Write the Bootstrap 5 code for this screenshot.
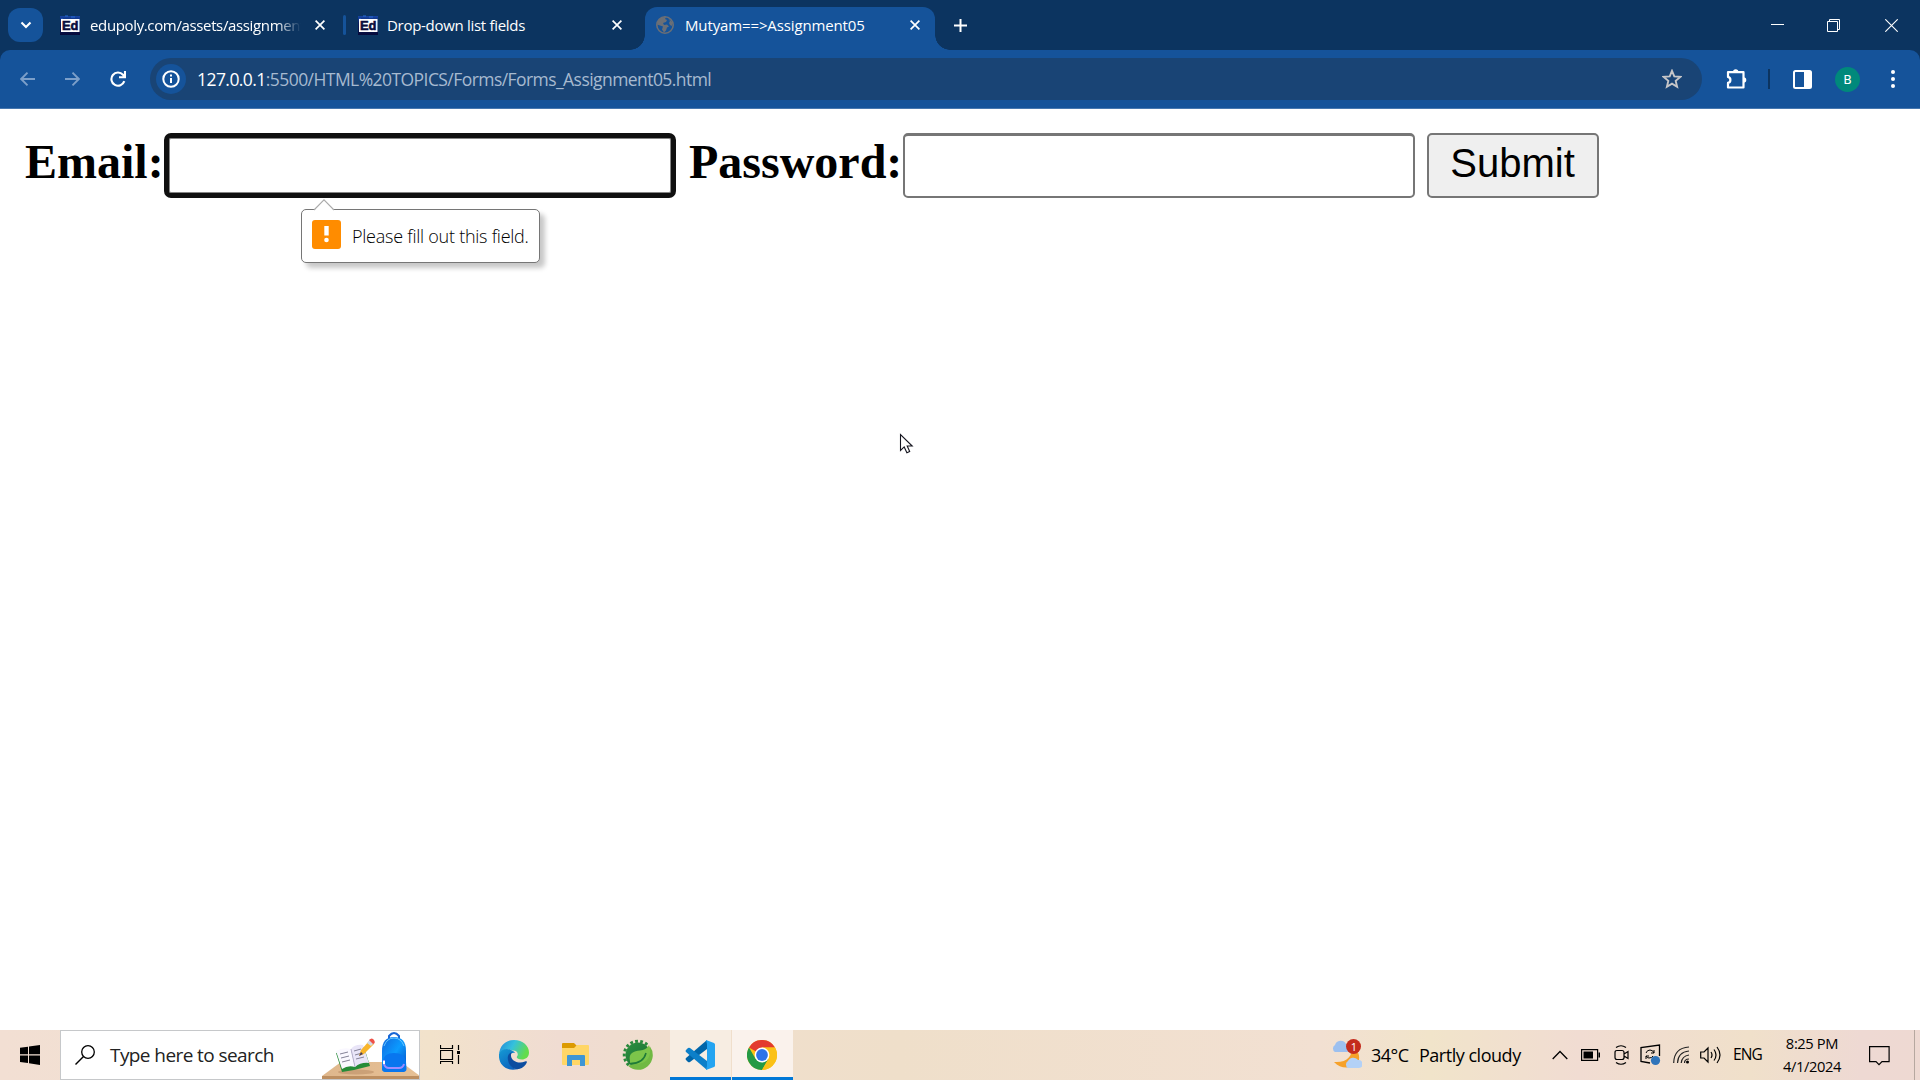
<!DOCTYPE html>
<html lang="en">
<head>
<meta charset="utf-8">
<title>Mutyam==&gt;Assignment05</title>
<link rel="stylesheet" href="https://cdn.jsdelivr.net/npm/bootstrap@5.3.0/dist/css/bootstrap.min.css">
<style>
  body { width: 1920px; height: 1080px; overflow: hidden; background: #fff; font-family: "Open Sans", "Noto Sans", sans-serif; color: #000; }
  svg { display: block; flex: none; }
  .tabstrip { height: 50px; background: #0c3460; color: #fff; font-size: 15px; }
  .tab-search { width: 35px; height: 34px; border-radius: 12px; background: #15539a; margin-left: 8px; }
  .tab-item { height: 50px; }
  .tab-label { line-height: 50px; white-space: nowrap; }
  .t1 { width: 215px; margin-left: 10px; letter-spacing: -.36px; -webkit-mask-image: linear-gradient(90deg, #000 186px, transparent 211px); }
  .t2 { width: 221px; margin-left: 9px; letter-spacing: -.3px; }
  .t3 { width: 221px; margin-left: 11px; letter-spacing: -.13px; }
  .tab-sep { width: 3px; height: 20px; border-radius: 2px; background: #15539a; }
  .tab-live { width: 290px; height: 43px; margin-top: 7px; background: #15539a; border-radius: 12px 12px 0 0; position: relative; padding-left: 11px; }
  .tab-live .tab-label { line-height: 36px; }
  .tab-live::before, .tab-live::after { content: ""; position: absolute; bottom: 0; width: 15px; height: 15px; }
  .tab-live::before { left: -15px; background: radial-gradient(circle at 0 0, transparent 14.5px, #15539a 15px); }
  .tab-live::after { right: -15px; background: radial-gradient(circle at 100% 0, transparent 14.5px, #15539a 15px); }
  .toolbar-wrap { background: #0c3460; height: 59px; }
  .toolbar { height: 59px; background: #15539a; border-radius: 10px 10px 0 0; border-bottom: 1px solid #4677af; }
  .omnibox { width: 1552px; height: 42px; border-radius: 21px; background: #194475; padding-left: 6px; margin-left: 24px; }
  .site-info { width: 30px; height: 30px; border-radius: 50%; background: #15539a; }
  .address { color: #a7bad0; font-size: 17.5px; margin-left: 11px; white-space: nowrap; letter-spacing: -.56px; }
  .profile { width: 25px; height: 25px; border-radius: 50%; background: #00897b; color: #fff; font: 13px/25px Roboto, sans-serif; text-align: center; }
  .viewport { height: 921px; padding: 24px 0 0 25px; }
  .form-row { font: bold 48px/57px "Liberation Serif", serif; }
  .field { width: 512px; height: 65px; border: 2px solid #767676; border-top-width: 3px; border-radius: 5px; padding: 0 8px; font-size: 40px; }
  .field:focus, .field-on { border: 5px solid #101010; border-radius: 7px; outline: 0; box-shadow: inset 0 0 0 1px #858585; }
  .send { width: 172px; height: 65px; border: 2px solid #767676; border-radius: 5px; background: #efefef; color: #000; font: 40px/56px "Liberation Sans", sans-serif; padding: 0 1px 5px 0; }
  .bubble { position: absolute; left: 301px; top: 209px; width: 239px; height: 54px; background: #fff; border: 1px solid #767676; border-radius: 5px; box-shadow: 5px 5px 5px rgba(0,0,0,.22); padding-left: 10px; }
  .bubble svg.tip { position: absolute; left: 11px; top: -11px; }
  .bubble-text { font: 300 18px "Open Sans", sans-serif; letter-spacing: -.25px; margin-left: 11px; color: #000; white-space: nowrap; }
  .warn { width: 29px; height: 29px; border-radius: 3px; background: #ff8c00; margin-top: -4px; }
  .pointer { position: absolute; left: 899px; top: 433px; }
  .taskbar { height: 50px; background: linear-gradient(90deg, #f2dfd3 0, #f1e1d0 330px, #f2e2cb 430px, #f0dcd2 560px, #f0dfcc 720px, #efdfca 900px, #f2e0d2 1320px, #f1e4ca 1430px, #f1dcd2 1580px, #f0e0ca 1750px, #eed9d3 1860px, #eed9d2 1920px); }
  .search-box { width: 360px; height: 50px; background: #fff; border: 1px solid #c6c8ca; padding-left: 14px; }
  .search-text { font-size: 19px; letter-spacing: -.58px; margin-left: 15px; white-space: nowrap; color: #222; width: 213px; }
  .task-tile { width: 61px; height: 50px; background: #f7ede2; border-bottom: 3px solid #0078d7; padding: 3px 1px 0 0; }
  .task-tile.on { background: #faf2ec; margin-left: 1px; }
  .tray { font-size: 18px; white-space: nowrap; }
  .clock { font-size: 14.7px; line-height: 23px; width: 64px; text-align: center; letter-spacing: -.38px; }
</style>
<script src="https://cdn.jsdelivr.net/npm/bootstrap@5.3.0/dist/js/bootstrap.bundle.min.js"></script>
</head>
<body>
<svg width="0" height="0" style="position:absolute">
  <defs>
    <symbol id="close" viewBox="0 0 10 10"><path d="M.6.6l8.800 8.800M9.400.6L.6 9.400" stroke="#fff" stroke-width="1.700"/></symbol>
    <linearGradient id="favbg" x1="0" y1="0" x2="0" y2="1"><stop offset="0" stop-color="#1646a5"/><stop offset=".35" stop-color="#0b1f66"/><stop offset="1" stop-color="#070a3a"/></linearGradient>
    <symbol id="fav" viewBox="0 0 20 20"><path fill="url(#favbg)" d="M0 1h20v19H0z"/><path d="M1 4h2M5 1h3M11 2h4" stroke="#2a6bd0"/><rect x="1" y="4" width="18.500" height="13" fill="#fff"/><text x="2" y="15.300" font-family="Liberation Sans" font-size="13" font-weight="bold" textLength="16.500" lengthAdjust="spacingAndGlyphs" fill="#0a0c3c" stroke="#0a0c3c" stroke-width=".6">Ed</text></symbol>
  </defs>
</svg>

<header>
  <div class="tabstrip d-flex align-items-center">
    <div class="tab-search d-flex align-items-center justify-content-center"><svg width="12" height="8" viewBox="0 0 12 8"><path d="M1.500 1.500L6 6l4.500-4.500" fill="none" stroke="#fff" stroke-width="2.100"/></svg></div>
    <div class="tab-item d-flex align-items-center" style="margin-left:17px">
      <svg width="20" height="20"><use href="#fav"/></svg>
      <div class="tab-label t1">edupoly.com/assets/assignment</div>
      <svg width="10" height="10" style="margin-left:10px"><use href="#close"/></svg>
    </div>
    <div class="tab-sep" style="margin-left:18px"></div>
    <div class="tab-item d-flex align-items-center" style="margin-left:12px">
      <svg width="20" height="20"><use href="#fav"/></svg>
      <div class="tab-label t2">Drop-down list fields</div>
      <svg width="10" height="10" style="margin-left:4px"><use href="#close"/></svg>
    </div>
    <div class="tab-live d-flex align-items-start" style="margin-left:23px">
      <svg width="18" height="18" viewBox="0 0 18 18" style="margin-top:9px"><circle cx="9" cy="9" r="8.200" fill="#15539a" stroke="#6b6f76" stroke-width="1.600"/><path fill="#6b6f76" d="M2 5l3-3.500 5-.5-1 2 2 1-1 2-3 1 1 2 3-.5 2 2-2 1-1 3-2 2-2-3 1-3-3-1-3-1zM12 2l4 4v4l-2-1-1-2 1-2z"/></svg>
      <div class="tab-label t3">Mutyam==&gt;Assignment05</div>
      <svg width="10" height="10" style="margin:13px 0 0 4px"><use href="#close"/></svg>
    </div>
    <svg width="13" height="13" viewBox="0 0 13 13" style="margin-left:19px"><path d="M6.500 0v13M0 6.500h13" stroke="#fff" stroke-width="2"/></svg>
    <svg class="ms-auto" width="13" height="13" viewBox="0 0 13 13"><path d="M0 5.500h13" stroke="#fff"/></svg>
    <svg width="13" height="13" viewBox="0 0 13 13" style="margin-left:43px"><path d="M.5 2.500h10v10H.5zM2.500 2.500v-2h10v10h-2" fill="none" stroke="#fff"/></svg>
    <svg width="13" height="13" viewBox="0 0 13 13" style="margin:0 22px 0 45px"><path d="M.3.3l12.400 12.400M12.700.3L.3 12.700" stroke="#fff" stroke-width="1.100"/></svg>
  </div>
  <div class="toolbar-wrap">
    <div class="toolbar d-flex align-items-center">
      <svg width="15" height="14" viewBox="0 0 15 14" style="margin-left:20px"><path d="M15 7H1.500M7.500.7L1.200 7l6.300 6.300" fill="none" stroke="#7c9fc9" stroke-width="1.900"/></svg>
      <svg width="15" height="14" viewBox="0 0 15 14" style="margin-left:30px"><path d="M0 7h13.500M7.500.7L13.800 7l-6.300 6.300" fill="none" stroke="#7c9fc9" stroke-width="1.900"/></svg>
      <svg width="16" height="16" viewBox="0 0 16 16" style="margin-left:30px"><path d="M14.300 10.200A6.600 6.600 0 1 1 13 3.800L14.800 6M15 0v6.300H9" fill="none" stroke="#fff" stroke-width="2.100"/></svg>
      <div class="omnibox d-flex align-items-center">
        <div class="site-info d-flex align-items-center justify-content-center"><svg width="18" height="18" viewBox="0 0 18 18"><circle cx="9" cy="9" r="7.700" fill="none" stroke="#fff" stroke-width="2"/><path d="M9 8v5M9 4.600v2" stroke="#fff" stroke-width="2"/></svg></div>
        <div class="address"><span class="text-white">127.0.0.1</span>:5500/HTML%20TOPICS/Forms/Forms_Assignment05.html</div>
        <svg class="ms-auto" style="margin-right:20px" width="20" height="20" viewBox="0 0 20 20"><path d="M10 1.800l2.300 5.600 6 .5-4.600 4 1.400 5.900-5.100-3.100-5.100 3.100 1.400-5.900-4.600-4 6-.5z" fill="none" stroke="#c6c6c8" stroke-width="1.900"/></svg>
      </div>
      <svg width="22" height="22" viewBox="0 0 22 22" style="margin-left:24px"><path d="M2 4.200h15.500v15.300H2v-4.600c3.200-.8 3.200-5.200 0-6z" fill="none" stroke="#fff" stroke-width="2.200" stroke-linejoin="round"/><path d="M7 4a2.700 2.700 0 0 1 5.400 0zM17.500 9.200a2.800 2.800 0 0 1 0 5.600z" fill="#fff"/></svg>
      <div style="width:2px;height:20px;background:#0c3460;margin-left:20px"></div>
      <svg width="19" height="19" viewBox="0 0 19 19" style="margin-left:23px"><rect x="1" y="1" width="17" height="17" rx="1.500" fill="none" stroke="#fff" stroke-width="2"/><path d="M11 1h7v17h-7z" fill="#fff"/></svg>
      <div class="profile" style="margin-left:23px">B</div>
      <svg width="4" height="18" viewBox="0 0 4 18" style="margin-left:31px" fill="#fff"><circle cx="2" cy="2" r="2"/><circle cx="2" cy="9" r="2"/><circle cx="2" cy="16" r="2"/></svg>
    </div>
  </div>
</header>

<main class="viewport">
  <form class="form-row d-flex align-items-start">
    <label for="mail" style="width:139px">Email:</label>
    <input id="mail" type="text" class="field field-on">
    <label for="pass" style="margin-left:13px;width:214px">Password:</label>
    <input id="pass" type="password" class="field">
    <button type="button" class="send" style="margin-left:12px">Submit</button>
  </form>
</main>

<footer class="taskbar d-flex align-items-center">
  <svg width="20" height="20" viewBox="0 0 20 20" style="margin:0 20px"><path d="M0 2.800L8 1.700v7.600H0zM9 1.500L20 0v9.300H9zM0 10.400h8V18l-8-1.100zM9 10.400h11V20L9 18.300z"/></svg>
  <div class="search-box d-flex align-items-center">
    <svg width="20" height="20" viewBox="0 0 20 20"><circle cx="13" cy="7" r="6.300" fill="none" stroke="#000" stroke-width="1.300"/><path d="M8.500 11.500L.5 19.500" stroke="#000" stroke-width="1.400"/></svg>
    <div class="search-text">Type here to search</div>
    <svg width="97" height="48" viewBox="0 0 97 48">
      <defs><linearGradient id="desk" x1="0" y1="0" x2="1" y2="0"><stop offset="0" stop-color="#dfb78c"/><stop offset="1" stop-color="#e6c095"/></linearGradient><linearGradient id="bag" x1="0" y1="0" x2="1" y2="1"><stop offset="0" stop-color="#1267dd"/><stop offset=".5" stop-color="#0b9bff"/><stop offset="1" stop-color="#0848bd"/></linearGradient></defs>
      <path d="M19 31h60l19 14H0z" fill="url(#desk)"/><path d="M0 45h98v3H0z" fill="#bd8f61"/>
      <ellipse cx="34" cy="41" rx="18" ry="2.500" fill="#bd9068" opacity=".6"/>
      <path d="M14 22l6 19 12-2 16-4-6-19-10 3z" fill="#268c38"/><path d="M14 20l6 18q6-4 13-2l-4-18q-8-2-15 2z" fill="#faf8ff"/><path d="M29 18q4-5 12-4l6 18q-8-1-14 4z" fill="#e9e5f8"/><path d="M29 18l4 18" stroke="#b9b1cf"/><path d="M18 23l8-2M19 27l8-2M20 31l8-2M32 20l7-2M33 24l7-2M34 28l8-2" stroke="#858398" stroke-width="1"/>
      <path d="M37 25l2-6 9-10 4 4-10 10z" fill="#f8b52b"/><path d="M45 12l3-4 4 4-3 3z" fill="#d1dbe8"/><path d="M47 9q3-3 5 0t-1 4z" fill="#ef5147"/><path d="M37 25l2-4 2 2z" fill="#483e60"/>
      <path d="M67 9V5q5-6 10 0v4" fill="none" stroke="#1765d5" stroke-width="2"/><path d="M60 20Q60 6 72 6t12 14v17q0 4-4 4H64q-4 0-4-4z" fill="url(#bag)"/><path d="M62 15Q65 7 72 7t10 8" fill="none" stroke="#67c7ff"/><path d="M61 31q0-9 11-9t12 9l.5 7q0 3-4 3H64q-4 0-4-3z" fill="#0876ef"/><path d="M62 29v4q1 4 5 4h10q4 0 5-4" fill="none" stroke="#9f8dff" stroke-width="2"/><path d="M62 30v3" stroke="#fff" stroke-width="2"/>
    </svg>
  </div>
  <svg width="20" height="20" viewBox="0 0 20 20" style="margin-left:20px"><path d="M.5 0v3.500h12V0M.5 5.500h12v9H.5zM.5 19v-2.500h12V19M18.500 0v5M18.500 10v9" fill="none" stroke="#000" stroke-width="1.200"/><path d="M17 6h3v3h-3z"/></svg>
  <svg width="30" height="30" viewBox="0 0 30 30" style="margin-left:39px">
    <defs><linearGradient id="e1" x1="0" y1="0" x2="1" y2=".35"><stop offset="0" stop-color="#2187d8"/><stop offset=".5" stop-color="#35c1dd"/><stop offset="1" stop-color="#63dc4c"/></linearGradient><linearGradient id="e2" x1="0" y1="0" x2=".6" y2="1"><stop offset="0" stop-color="#159bd5"/><stop offset="1" stop-color="#0c63bd"/></linearGradient></defs>
    <path d="M0 14C1 5 7 0 15 0c9 0 15 6 15 12.500 0 5-4 7-7 7-4 0-6-1.500-5-3 2-3 0-6-4-6C8 8.500 3 10 0 14z" fill="url(#e1)"/><path d="M0 14c2-5 8-6 12-4 2 1 4 2 4 3-4-1-6 3-6 6 0 5 4 10 9 10C8 32-1 25 0 14z" fill="url(#e2)"/><path d="M13 12c-3 1-5 4-4 8 1 6 6 10 11 9 4-1 7-4 8-7 0-1-1-1-2-.5-7 3-14-1-14-6 0-1 0-2 1-3.500z" fill="#0c4da0"/>
  </svg>
  <svg width="28" height="24" viewBox="0 0 28 24" style="margin-left:33px"><path d="M0 1q0-1 1-1h11l3 3v4H0z" fill="#dc9a00"/><path d="M0 5h12l3-3h11q1 0 1 1v18q0 1-1 1H1q-1 0-1-1z" fill="#ffd666"/><path d="M5 23V13q0-1 1-1h16q1 0 1 1v10h-5v-6h-8v6z" fill="#3e96d4"/></svg>
  <svg width="32" height="32" viewBox="-16 -16 32 32" style="margin-left:32px">
    <defs><linearGradient id="gear" x1="0" y1="0" x2="1" y2="1"><stop offset="0" stop-color="#2e9140"/><stop offset=".6" stop-color="#1f7a38"/></linearGradient></defs>
    <circle r="12.500" fill="url(#gear)"/>
    <path d="M-9.200 10.200A13.700 13.700 0 0 1 9.200 -10.200" fill="none" stroke="#2a8a3d" stroke-width="3" stroke-dasharray="2.800 2.200"/>
    <path d="M12-8.500A14.700 14.700 0 0 1-10 10.800L2 7z" fill="#71b943"/>
    <path d="M-8 6C-10-2-4-4 2-4.500 6-5 9-6 11-10 14-2 11 6 4 8-1 9.200-5 9-8 8z" fill="#7cc54a"/>
    <path d="M-9.500 8.500C-1 9 6 6 8-2" fill="none" stroke="#1f7a38" stroke-width="1.500"/>
  </svg>
  <div class="task-tile d-flex align-items-center justify-content-center" style="margin-left:16px"><svg width="30" height="30" viewBox="0 0 30 30"><path d="M22 0L1 18q-1 1 0 2l2 2q1 .7 2 0L22 9z" fill="#0065a9"/><path d="M22 30L1 12q-1-1 0-2l2-2q1-.7 2 0L22 21z" fill="#0c7fc9"/><path d="M21 0l8 3q1 .5 1 1.500v21q0 1-1 1.500l-8 3 1-4V4z" fill="#24a4f1"/></svg></div>
  <div class="task-tile on d-flex align-items-center justify-content-center"><svg width="30" height="30" viewBox="-15 -15 30 30"><circle r="15" fill="#fbc116"/><path d="M0 0L-13-7.500A15 15 0 0 1 13-7.500H0z" fill="#e33b2e"/><path d="M-13-7.500A15 15 0 0 0 0 15L6.500 3.750 0 0l-6.500 3.750z" fill="#249a45"/><path d="M6.500 3.750L0 15A15 15 0 0 0 13-7.500H0z" fill="#fbc116"/><circle r="7.400" fill="#fff"/><circle r="5.900" fill="#2d73e8"/></svg></div>
  <div class="tray d-flex align-items-center ms-auto">
    <svg width="31" height="32" viewBox="0 0 31 32"><path d="M21 7c1 10-5 17-18 16 8 9 22 6 25-2 1-6-2-11-7-14z" fill="#f6a12a"/><path d="M4 13a4 4 0 0 1 0-7 6 6 0 0 1 11-1 4 4 0 0 1 1 8z" fill="#9dc0ef"/><path d="M17 29a4 4 0 0 1 0-7 6 6 0 0 1 10-1 4 4 0 0 1 1 8z" fill="#b3d1f7"/><circle cx="22.500" cy="7.500" r="7.500" fill="#c42b1c"/><text x="19.700" y="12" fill="#fff" font-family="Open Sans" font-size="11">1</text></svg>
    <span style="width:48px;margin-left:9px;letter-spacing:-.5px">34°C</span>
    <span style="width:133px;letter-spacing:-.48px">Partly cloudy</span>
    <svg width="16" height="10" viewBox="0 0 16 10"><path d="M.7 9L8 1.500 15.300 9" fill="none" stroke="#000" stroke-width="1.300"/></svg>
    <svg width="19" height="12" viewBox="0 0 19 12" style="margin-left:13px"><path d="M.6.6h16v10.800H.6z" fill="none" stroke="#000" stroke-width="1.200"/><path d="M2.500 2.500h9.500v7H2.500zM17.500 3.500h1.500v5h-1.500z"/></svg>
    <svg width="15" height="20" viewBox="0 0 15 20" style="margin-left:14px"><path d="M2 2.500q5-3.500 10 0M2 17.500q5 3.500 10 0M10 12.500q0 2-2 2H3q-2 0-2-2v-5q0-2 2-2h5q2 0 2 2zM10 9l4-2.500v7L10 11" fill="none" stroke="#000" stroke-width="1.200"/></svg>
    <svg width="21" height="22" viewBox="0 0 21 22" style="margin-left:11px"><path d="M10 19L1 17.500V3.500L19.500 1v11" fill="none" stroke="#000" stroke-width="1.300"/><path d="M6 9q1-3 4-3t4 3M14 6v3h-3M13 12q-1 2-4 2-2 0-3-2M6 15v-3h3" fill="none" stroke="#000"/><circle cx="15.500" cy="16.500" r="4.600" fill="#2f74ba"/></svg>
    <svg width="17" height="18" viewBox="0 0 17 18" style="margin-left:12px"><path d="M.7 17Q1 2 16 1M4.500 17Q5 6 16 5M8.200 17Q9 10 16 9" fill="none" stroke="#222" stroke-width="1.200"/><path d="M11.500 17q0-4 4.500-4" fill="none" stroke="#222" stroke-width="1.200"/><circle cx="14.500" cy="16" r="1.500"/></svg>
    <svg width="22" height="18" viewBox="0 0 22 18" style="margin-left:10px"><path d="M.7 6H4l4-4v14l-4-4H.7zM11 6q2 3 0 6M14 3.500q4 5.500 0 11M17 1q6 8 0 16" fill="none" stroke="#000" stroke-width="1.200"/></svg>
    <span style="font-size:15.500px;letter-spacing:-.9px;margin-left:11px;width:47px">ENG</span>
    <div class="clock">8:25 PM<br>4/1/2024</div>
    <svg width="21" height="21" viewBox="0 0 21 21" style="margin-left:25px"><path d="M.6 1.600h19.500v15H13l-3 3-3-3H.6z" fill="none" stroke="#000" stroke-width="1.200"/></svg>
    <div style="height:50px;border-left:1px solid #b6a8a0;margin-left:24px;width:6px"></div>
  </div>
</footer>

<div class="bubble d-flex align-items-center" role="tooltip">
  <svg class="tip" width="22" height="12" viewBox="0 0 22 12"><path d="M1 11.500L11 1l10 10.500V12H1z" fill="#fff"/><path d="M1 11L11 .8 21 11" fill="none" stroke="#aaa" stroke-width="1.100"/></svg>
  <div class="warn d-flex align-items-center justify-content-center"><svg width="5" height="17" viewBox="0 0 5 17" fill="#fff"><path d="M.3 0h4.400v9.500H.3z"/><circle cx="2.500" cy="14" r="2.300"/></svg></div>
  <div class="bubble-text">Please fill out this field.</div>
</div>
<svg class="pointer" width="15" height="21" viewBox="0 0 15 21"><path d="M1.500 1.500v16l3.700-3.600 2.700 5.800 2.800-1.200L8.200 13h5z" fill="#fff" stroke="#15151f" stroke-width="1.100"/></svg>
</body>
</html>
